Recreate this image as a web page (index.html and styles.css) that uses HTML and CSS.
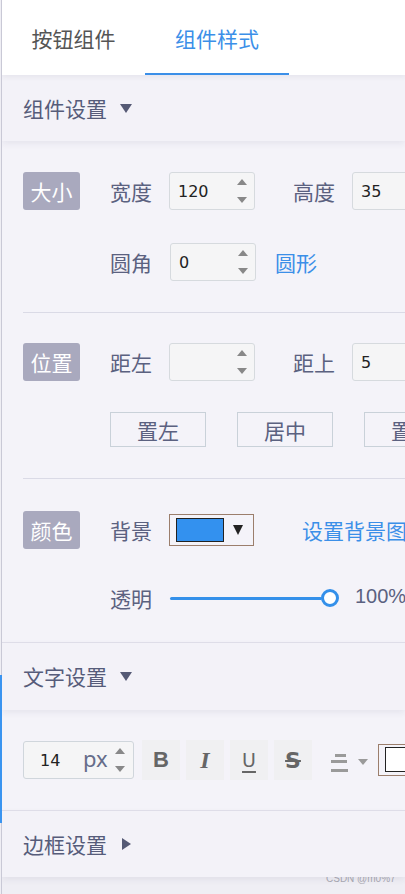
FILE: index.html
```html
<!DOCTYPE html>
<html lang="zh">
<head>
<meta charset="utf-8">
<link rel="stylesheet" href="styles.css">
</head>
<body>
<div class="app">
  <div class="tabs">
    <div class="tab first">按钮组件</div>
    <div class="tab active">组件样式</div>
  </div>

  <div class="sec-head"><span class="sec-title">组件设置</span><span class="tri-down"></span></div>
  <div class="sec-body style-body">
    <div class="group g-size">
      <span class="badge">大小</span>
      <div class="rows">
        <div class="row">
          <span class="label">宽度</span>
          <div class="num"><span class="val">120</span><span class="spin"><i class="up"></i><i class="dn"></i></span></div>
          <span class="label far">高度</span>
          <div class="num"><span class="val">35</span><span class="spin"><i class="up"></i><i class="dn"></i></span></div>
        </div>
        <div class="row">
          <span class="label">圆角</span>
          <div class="num num2"><span class="val">0</span><span class="spin"><i class="up"></i><i class="dn"></i></span></div>
          <span class="link">圆形</span>
        </div>
      </div>
    </div>

    <div class="group g-pos">
      <span class="badge">位置</span>
      <div class="rows">
        <div class="row">
          <span class="label">距左</span>
          <div class="num"><span class="val"></span><span class="spin"><i class="up"></i><i class="dn"></i></span></div>
          <span class="label far">距上</span>
          <div class="num"><span class="val">5</span><span class="spin"><i class="up"></i><i class="dn"></i></span></div>
        </div>
        <div class="row btn-row">
          <span class="btn">置左</span>
          <span class="btn">居中</span>
          <span class="btn">置右</span>
        </div>
      </div>
    </div>

    <div class="group g-color last">
      <span class="badge">颜色</span>
      <div class="rows">
        <div class="row">
          <span class="label">背景</span>
          <div class="picker"><span class="swatch"></span><span class="pk-tri"></span></div>
          <span class="link bg-link">设置背景图</span>
        </div>
        <div class="row">
          <span class="label">透明</span>
          <div class="slider"><span class="track"></span><span class="knob"></span></div>
          <span class="pct">100%</span>
        </div>
      </div>
    </div>
  </div>

  <div class="sec-head line-top"><span class="sec-title">文字设置</span><span class="tri-down"></span></div>
  <div class="sec-body text-body">
    <div class="toolbar">
      <div class="fs">
        <span class="fs-val">14</span>
        <span class="fs-unit">px</span>
        <span class="spin"><i class="up"></i><i class="dn"></i></span>
      </div>
      <span class="tb b">B</span>
      <span class="tb i">I</span>
      <span class="tb u">U</span>
      <span class="tb s">S</span>
      <span class="align">
        <svg width="18" height="20" viewBox="0 0 18 20"><rect x="5" y="0" width="11" height="3" fill="#9a9a9a"/><rect x="1" y="6" width="16" height="3" fill="#9a9a9a"/><rect x="1" y="15" width="17" height="3" fill="#9a9a9a"/></svg>
      </span>
      <span class="caret"></span>
      <span class="fcolor"><span class="fswatch"></span></span>
    </div>
  </div>

  <div class="sec-head line-top last-head"><span class="sec-title">边框设置</span><span class="tri-right"></span></div>
</div>
<span class="active-bar"></span>
<span class="watermark">CSDN @m0%7</span>
</body>
</html>
```

FILE: styles.css
```css
* { box-sizing: border-box; margin: 0; padding: 0; }
html, body { width: 405px; height: 894px; overflow: hidden; }
body {
  font-family: "Noto Sans CJK SC", "Microsoft YaHei", sans-serif;
  background: #efeef4;
  padding-left: 1px;
  position: relative;
}
.app {
  border-left: 1px solid #c9c9d6;
  height: 894px;
  background: #efeef4;
  overflow: hidden;
}
.tabs {
  display: flex;
  height: 75px;
  background: #fff;
  position: relative;
  z-index: 3;
  box-shadow: 0 2px 5px rgba(60, 60, 90, 0.07);
}
.tab {
  display: flex;
  align-items: center;
  justify-content: center;
  font-size: 21px;
  line-height: 1;
  color: #555;
  width: 144px;
  padding-top: 1px;
  white-space: nowrap;
}
.tab.first { width: 143px; }
.tab.active { color: #3b8fe8; border-bottom: 2px solid #3b8fe8; padding-top: 3px; }

.sec-head {
  display: flex;
  align-items: center;
  height: 66px;
  padding-left: 21px;
  background: #f3f2f8;
  position: relative;
  z-index: 2;
  box-shadow: 0 3px 6px rgba(60, 60, 100, 0.07);
}
.sec-head.line-top { border-top: 1px solid #dedde8; height: 68px; }
.sec-head.last-head { height: 67px; }
.sec-title { font-size: 21px; line-height: 1; color: #565c7a; white-space: nowrap; }
.tri-down {
  width: 0; height: 0;
  margin-left: 13px;
  border-left: 6px solid transparent;
  border-right: 6px solid transparent;
  border-top: 9px solid #555a75;
}
.tri-right {
  width: 0; height: 0;
  margin-left: 15px;
  border-top: 6.5px solid transparent;
  border-bottom: 6.5px solid transparent;
  border-left: 9px solid #555a75;
}

.sec-body { background: #f4f3f9; padding-left: 21px; }
.style-body { padding-top: 31px; padding-bottom: 25px; }
.text-body { padding-top: 30px; padding-bottom: 31px; height: 100px; }

.group {
  display: flex;
  gap: 30px;
  border-bottom: 1px solid #dadae6;
  padding-bottom: 31px;
  margin-bottom: 30px;
}
.group.last { border-bottom: 0; padding-bottom: 0; margin-bottom: 0; }
.g-color { padding-top: 2px; }
.badge {
  width: 57px;
  height: 38px;
  flex: none;
  background: #a9a9be;
  border-radius: 3px;
  color: #fff;
  font-size: 21px;
  line-height: 38px;
  text-align: center;
  white-space: nowrap;
}
.rows { display: flex; flex-direction: column; gap: 33px; }
.g-pos .rows { gap: 31px; }
.g-color .rows { gap: 30px; }
.row { display: flex; align-items: center; height: 38px; white-space: nowrap; }
.btn-row { height: 35px; gap: 31px; }
.label {
  width: 42px;
  flex: none;
  font-size: 21px;
  line-height: 1;
  color: #5b6180;
  margin-right: 17px;
}
.label.far { margin-left: 38px; }
.num {
  width: 86px;
  height: 38px;
  flex: none;
  display: flex;
  align-items: center;
  justify-content: space-between;
  padding: 0 7px 0 8px;
  background: #f5f5f6;
  border: 1px solid #d6dade;
  border-radius: 3px;
}
.num2 { margin-left: 1px; }
.val { font-family: "DejaVu Sans", sans-serif; font-size: 16px; color: #222; }
.spin { display: flex; flex-direction: column; gap: 12px; }
.spin i {
  display: block;
  width: 0; height: 0;
  border-left: 5.5px solid transparent;
  border-right: 5.5px solid transparent;
}
.spin .up { border-bottom: 6px solid #888; }
.spin .dn { border-top: 6px solid #888; }
.link { font-size: 21px; line-height: 1; color: #3b8fe8; margin-left: 19px; }
.bg-link { margin-left: 48px; }
.btn {
  width: 96px;
  height: 35px;
  flex: none;
  border: 1px solid #c9d1d9;
  display: flex;
  align-items: center;
  justify-content: center;
  font-size: 21px;
  color: #5b6180;
}
.picker {
  width: 85px;
  height: 32px;
  flex: none;
  border: 1px solid #9b7e6c;
  display: flex;
  align-items: center;
  padding-left: 6px;
  gap: 9px;
}
.swatch { width: 48px; height: 24px; background: #3391ef; border: 1px solid #222; }
.pk-tri {
  width: 0; height: 0;
  border-left: 5.5px solid transparent;
  border-right: 5.5px solid transparent;
  border-top: 10px solid #222;
}
.slider { display: flex; align-items: center; width: 169px; margin-left: 1px; flex: none; }
.track { flex: 1; height: 3px; background: #3490ea; border-radius: 2px; }
.knob {
  width: 18px; height: 18px;
  margin-left: -1px;
  border: 3px solid #3490ea;
  border-radius: 50%;
  background: #fff;
}
.pct { font-family: "Liberation Sans", Arial, sans-serif; font-size: 20px; color: #5b6180; margin-left: 16px; margin-top: -3px; }

.toolbar { display: flex; align-items: center; height: 40px; white-space: nowrap; }
.fs {
  width: 111px;
  height: 38px;
  flex: none;
  display: flex;
  align-items: center;
  background: #f5f5f6;
  border: 1px solid #d0d6dc;
  border-radius: 3px;
  padding-left: 16px;
}
.fs-val { font-family: "DejaVu Sans", sans-serif; font-size: 16px; color: #222; width: 43px; }
.fs-unit { font-family: "Noto Sans", sans-serif; font-size: 22px; line-height: 1; color: #666d8a; margin-top: -4px; }
.fs .spin { margin-left: 7px; }
.tb {
  width: 38px;
  height: 40px;
  flex: none;
  background: #f0f0f2;
  display: flex;
  align-items: center;
  justify-content: center;
  color: #666;
  font-size: 21px;
  margin-left: 6px;
}
.tb.b { margin-left: 8px; font-family: "Liberation Sans", sans-serif; font-weight: bold; font-size: 22px; }
.tb.i { font-family: "Liberation Serif", serif; font-style: italic; font-weight: bold; font-size: 24px; }
.tb.u { font-family: "DejaVu Sans", sans-serif; font-size: 19px; text-decoration: underline; text-underline-offset: 4px; text-decoration-thickness: 2px; }
.tb.s { font-family: "DejaVu Sans", sans-serif; font-weight: bold; font-size: 22px; text-decoration: line-through; text-decoration-thickness: 2px; }
.align { margin-left: 18px; display: flex; margin-top: 8px; }
.caret {
  width: 0; height: 0;
  margin-left: 10px;
  margin-top: 4px;
  border-left: 5.5px solid transparent;
  border-right: 5.5px solid transparent;
  border-top: 6px solid #9a9a9a;
}
.fcolor {
  width: 40px;
  height: 32px;
  flex: none;
  margin-left: 10px;
  border: 1px solid #9b7e6c;
  padding: 2px 0 0 6px;
}
.fswatch { display: block; width: 40px; height: 25px; background: #fff; border: 1px solid #222; }

.active-bar {
  position: absolute;
  left: 0; top: 675px;
  width: 2px; height: 148px;
  background: #3a94f0;
}
.watermark {
  position: absolute;
  left: 326px; top: 873px;
  font-family: "Liberation Sans", Arial, sans-serif;
  font-size: 10px;
  color: #a9a9b2;
}
```
